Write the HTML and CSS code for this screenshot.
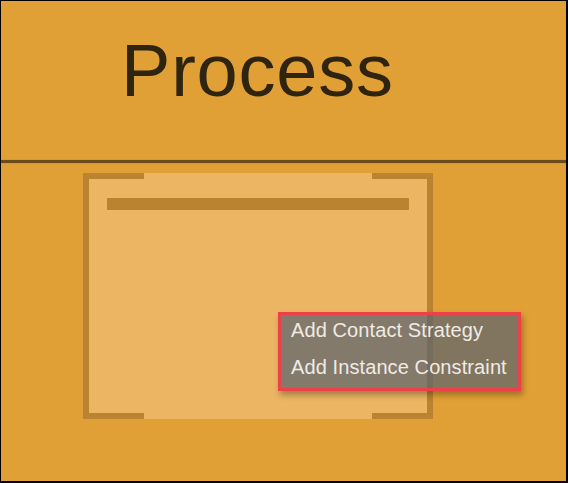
FILE: index.html
```html
<!DOCTYPE html>
<html>
<head>
<meta charset="utf-8">
<link rel="stylesheet" href="styles.css">
</head>
<body>
<div class="page">
  <header class="head">
    <h1 class="title">Process</h1>
  </header>
  <div class="divider"></div>
  <main class="canvas">
    <div class="node">
      <div class="node-bar"></div>
    </div>
  </main>
  <ul class="menu">
    <li class="menu-item">Add Contact Strategy</li>
    <li class="menu-item">Add Instance Constraint</li>
  </ul>
</div>
</body>
</html>
```

FILE: styles.css
```css
html, body {
  margin: 0;
  padding: 0;
}
body {
  width: 568px;
  height: 483px;
  overflow: hidden;
  font-family: "Liberation Sans", Arial, sans-serif;
}
.page {
  position: relative;
  box-sizing: border-box;
  width: 568px;
  height: 483px;
  background: #e1a035;
  border: 1px solid #000;
  border-right-width: 2px;
  border-bottom-width: 2px;
}
.head {
  height: 159px;
  box-sizing: border-box;
  padding: 33px 0 0 120px;
}
.title {
  margin: 0;
  font-weight: normal;
  font-size: 74px;
  line-height: 74px;
  letter-spacing: 0.8px;
  color: #2f2410;
}
.divider {
  height: 3px;
  background: #6b4c1c;
  box-shadow: 0 0 1px rgba(80, 55, 20, 0.6);
}
.canvas {
  padding: 10px 0 0 82px;
}
.node {
  box-sizing: border-box;
  width: 350px;
  height: 246px;
  padding: 25px 24px;
  background:
    linear-gradient(#b9832f, #b9832f) left top / 6px 100% no-repeat,
    linear-gradient(#b9832f, #b9832f) right top / 6px 100% no-repeat,
    linear-gradient(#b9832f, #b9832f) left top / 61px 6px no-repeat,
    linear-gradient(#b9832f, #b9832f) right top / 61px 6px no-repeat,
    linear-gradient(#b9832f, #b9832f) left bottom / 61px 6px no-repeat,
    linear-gradient(#b9832f, #b9832f) right bottom / 61px 6px no-repeat,
    #ebb563;
}
.node-bar {
  height: 12px;
  background: #b9832f;
}
.menu {
  position: absolute;
  left: 277px;
  top: 311px;
  width: 237px;
  margin: 0;
  padding: 0;
  list-style: none;
  border: 3px solid #ee4048;
  background: rgba(92, 100, 112, 0.72);
  box-shadow: 2px 4px 6px rgba(0, 0, 0, 0.3);
}
.menu-item {
  padding: 4px 10px 11px 10px;
  font-size: 20px;
  line-height: 22px;
  letter-spacing: 0.1px;
  color: #efebe5;
  white-space: nowrap;
}
.menu-item + .menu-item {
  padding-top: 4px;
  padding-bottom: 10px;
}
```
